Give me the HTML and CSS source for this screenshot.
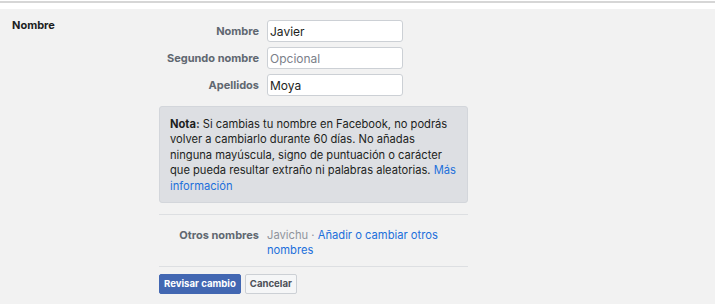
FILE: index.html
```html
<!DOCTYPE html>
<html lang="es">
<head>
<meta charset="utf-8">
<title>Nombre</title>
<link rel="stylesheet" href="styles.css">
</head>
<body>
<div class="topline"></div>
<div class="panel">
  <div class="section-title">Nombre</div>
  <div class="content">
    <div class="fields">
      <label class="field-label" for="f1">Nombre</label>
      <input class="field-input" id="f1" type="text" value="Javier">
      <label class="field-label" for="f2">Segundo nombre</label>
      <input class="field-input" id="f2" type="text" placeholder="Opcional">
      <label class="field-label" for="f3">Apellidos</label>
      <input class="field-input" id="f3" type="text" value="Moya">
    </div>
    <div class="note">
      <b>Nota:</b> Si cambias tu nombre en Facebook, no podrás volver a cambiarlo durante 60 días. No añadas ninguna mayúscula, signo de puntuación o carácter que pueda resultar extraño ni palabras aleatorias. <a href="#" class="link">Más información</a>
    </div>
    <div class="other-row">
      <div class="field-label">Otros nombres</div>
      <div class="other-value"><span class="muted">Javichu</span> <span class="muted">·</span> <a href="#" class="link">Añadir o cambiar otros nombres</a></div>
    </div>
    <div class="actions">
      <button class="btn btn-primary">Revisar cambio</button>
      <button class="btn btn-default">Cancelar</button>
    </div>
  </div>
</div>
</body>
</html>
```

FILE: styles.css
```css
* { box-sizing: border-box; }
html, body { margin: 0; padding: 0; background: #fff; }
body {
  font-family: Inter, "Liberation Sans", Arial, sans-serif;
  color: #1c1e21;
  width: 720px;
  height: 304px;
  overflow: hidden;
}
.topline {
  margin-top: 1px;
  width: 715px;
  height: 2px;
  background: #d6d6d6;
}
.panel {
  margin-top: 6px;
  width: 715px;
  height: 300px;
  background: #f2f2f2;
  padding: 8px 0 0 12px;
  display: grid;
  grid-template-columns: 147px 309px;
  align-items: start;
}
.section-title {
  font-size: 11px;
  font-weight: 700;
  line-height: 16px;
  color: #1c1e21;
}
.content { padding-top: 3px; }
.fields {
  display: grid;
  grid-template-columns: 100px 136px;
  column-gap: 8px;
  row-gap: 5px;
  align-items: center;
}
.field-label {
  font-size: 11px;
  font-weight: 700;
  color: #606770;
  text-align: right;
  line-height: 15px;
}
.field-input {
  height: 22px;
  width: 136px;
  border: 1px solid #ccd0d5;
  border-radius: 3px;
  background: #fff;
  font-family: inherit;
  font-size: 12px;
  color: #1c1e21;
  padding: 0 2px;
  margin: 0;
  outline: none;
}
.field-input::placeholder { color: #7b808a; }
.note {
  margin-top: 10px;
  background: #dddfe3;
  border: 1px solid #d3d6db;
  border-radius: 3px;
  padding: 10px 10px 8px 10px;
  font-size: 11.15px;
  line-height: 15.4px;
  color: #1c1e21;
}
.note b { font-weight: 700; }
.link { color: #216fdb; text-decoration: none; }
.other-row {
  margin-top: 11px;
  border-top: 1px solid #dddfe2;
  border-bottom: 1px solid #dddfe2;
  padding: 13px 0 7px 0;
  display: grid;
  grid-template-columns: 100px 201px;
  column-gap: 8px;
  align-items: start;
}
.other-value {
  font-size: 11.2px;
  line-height: 15.4px;
}
.muted { color: #90949c; }
.actions {
  margin-top: 7px;
  display: flex;
  gap: 4px;
}
.btn {
  height: 20px;
  font-family: inherit;
  font-size: 9.6px;
  font-weight: 700;
  border-radius: 2px;
  padding: 0 4px;
  line-height: 18px;
  margin: 0;
}
.btn-primary {
  background: #4267b2;
  border: 1px solid #4267b2;
  color: #fff;
}
.btn-default {
  background: #f5f6f7;
  border: 1px solid #ccd0d5;
  color: #4b4f56;
}
```
